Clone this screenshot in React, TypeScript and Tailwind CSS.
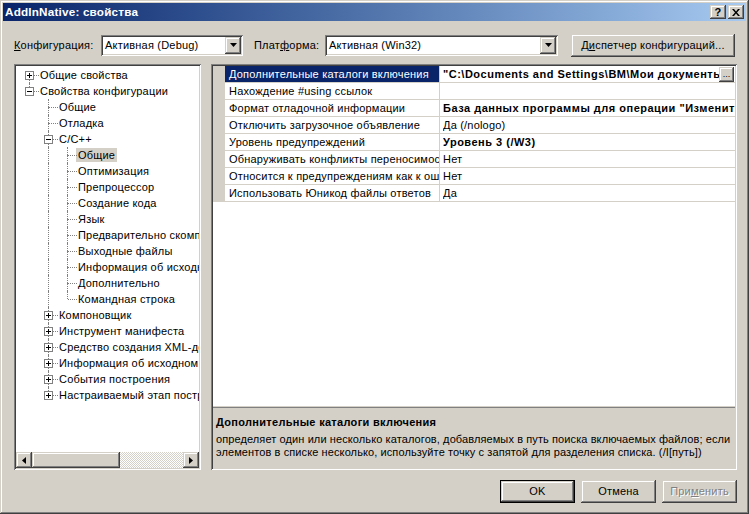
import React from "react";

const raised =
  "shadow-[inset_-1px_-1px_#404040,inset_1px_1px_#d4d0c8,inset_-2px_-2px_#808080,inset_2px_2px_#ffffff]";
const sunken =
  "shadow-[inset_1px_1px_#808080,inset_-1px_-1px_#ffffff,inset_2px_2px_#404040,inset_-2px_-2px_#d4d0c8]";

interface Node {
  t: string;
  d: number;
  box?: "+" | "-";
  up: boolean;
  down: boolean;
  anc: boolean[];
  sel?: boolean;
}

const lvl2 = [
  "Общие",
  "Оптимизация",
  "Препроцессор",
  "Создание кода",
  "Язык",
  "Предварительно скомпилированные заголовки",
  "Выходные файлы",
  "Информация об исходном коде",
  "Дополнительно",
  "Командная строка",
];

const lvl1After = [
  "Компоновщик",
  "Инструмент манифеста",
  "Средство создания XML-документов",
  "Информация об исходном коде",
  "События построения",
  "Настраиваемый этап построения",
];

const tree: Node[] = [
  { t: "Общие свойства", d: 0, box: "+", up: false, down: true, anc: [] },
  { t: "Свойства конфигурации", d: 0, box: "-", up: true, down: false, anc: [] },
  { t: "Общие", d: 1, up: true, down: true, anc: [false] },
  { t: "Отладка", d: 1, up: true, down: true, anc: [false] },
  { t: "C/C++", d: 1, box: "-", up: true, down: true, anc: [false] },
  ...lvl2.map((t, i) => ({
    t,
    d: 2,
    up: true,
    down: i < lvl2.length - 1,
    anc: [false, true],
    sel: i === 0,
  })),
  ...lvl1After.map((t, i) => ({
    t,
    d: 1,
    box: "+" as const,
    up: true,
    down: i < lvl1After.length - 1,
    anc: [false],
  })),
];

const props = [
  { n: "Дополнительные каталоги включения", v: "\"C:\\Documents and Settings\\BM\\Мои документы", b: true, sel: true },
  { n: "Нахождение #using ссылок", v: "" },
  { n: "Формат отладочной информации", v: "База данных программы для операции \"Изменить и продолжить\" (/ZI)", b: true },
  { n: "Отключить загрузочное объявление", v: "Да (/nologo)" },
  { n: "Уровень предупреждений", v: "Уровень 3 (/W3)", b: true },
  { n: "Обнаруживать конфликты переносимости на 64-разрядную платформу", v: "Нет" },
  { n: "Относится к предупреждениям как к ошибкам", v: "Нет" },
  { n: "Использовать Юникод файлы ответов", v: "Да" },
];

function ExpandBox({ sign }: { sign: "+" | "-" }) {
  return (
    <div className="absolute left-[5px] top-[4px] w-[9px] h-[9px] bg-white border border-[#808080] flex items-center justify-center">
      <div className="relative w-[5px] h-[5px]">
        <div className="absolute left-0 top-[2px] w-[5px] h-[1px] bg-black" />
        {sign === "+" && <div className="absolute left-[2px] top-0 w-[1px] h-[5px] bg-black" />}
      </div>
    </div>
  );
}

function TreeRow({ node }: { node: Node }) {
  return (
    <div className="flex h-[16px] items-center whitespace-nowrap">
      {node.anc.map((on, i) => (
        <div key={i} className="relative w-[19px] h-[16px] shrink-0">
          {on && <div className="absolute left-[9px] top-0 h-[16px] border-l border-dotted border-[#808080]" />}
        </div>
      ))}
      <div className="relative w-[19px] h-[16px] shrink-0">
        {node.up && <div className="absolute left-[9px] top-0 h-[8px] border-l border-dotted border-[#808080]" />}
        {node.down && <div className="absolute left-[9px] top-[8px] h-[8px] border-l border-dotted border-[#808080]" />}
        <div className="absolute left-[10px] top-[8px] w-[9px] border-t border-dotted border-[#808080]" />
        {node.box && <ExpandBox sign={node.box} />}
      </div>
      <span className={`px-[2px] -ml-[1px] leading-[14px] ${node.sel ? "bg-[#d4d0c8]" : ""}`}>{node.t}</span>
    </div>
  );
}

function Arrow({ dir }: { dir: "down" | "left" | "right" }) {
  const pts = dir === "down" ? "0,0 7,0 3.5,4" : dir === "left" ? "4,0 4,7 0,3.5" : "0,0 0,7 4,3.5";
  const w = dir === "down" ? 7 : 4;
  const h = dir === "down" ? 4 : 7;
  return (
    <svg width={w} height={h} viewBox={`0 0 ${w} ${h}`}>
      <polygon points={pts} fill="#000" />
    </svg>
  );
}

function Combo({ width, text }: { width: string; text: string }) {
  return (
    <div className={`${width} h-[21px] bg-white ${sunken} flex items-center p-[2px]`}>
      <span className="flex-1 pl-[2px] whitespace-nowrap overflow-hidden">{text}</span>
      <div className={`w-[16px] h-[17px] bg-[#d4d0c8] ${raised} flex items-center justify-center`}>
        <Arrow dir="down" />
      </div>
    </div>
  );
}

function Btn({ children, def, w = "w-[75px]" }: { children: React.ReactNode; def?: boolean; w?: string }) {
  return (
    <div className={`${w} h-[23px] ${def ? "border border-black" : ""} bg-[#d4d0c8]`}>
      <div className={`w-full h-full ${raised} flex items-center justify-center`}>{children}</div>
    </div>
  );
}

export default function App() {
  return (
    <div
      className={`w-[749px] h-[514px] bg-[#d4d0c8] ${raised} p-[3px] flex flex-col font-['Liberation_Sans',Arial,sans-serif] text-[11px] tracking-[0.2px] text-black overflow-hidden`}
    >
      {/* title bar */}
      <div className="h-[18px] bg-linear-to-r from-[#0a246a] to-[#a6caf0] flex items-center pl-[2px] pr-[2px]">
        <span className="flex-1 text-white font-bold text-[11.7px]">AddInNative: свойства</span>
        <div className={`w-[16px] h-[14px] bg-[#d4d0c8] ${raised} flex items-center justify-center font-bold text-[11px] leading-none`}>
          ?
        </div>
        <div className={`ml-[2px] w-[16px] h-[14px] bg-[#d4d0c8] ${raised} flex items-center justify-center`}>
          <svg width="8" height="7" viewBox="0 0 8 7">
            <path d="M0 0h2l2 2.5L6 0h2L5 3.5 8 7H6L4 4.5 2 7H0l3-3.5z" fill="#000" />
          </svg>
        </div>
      </div>

      {/* config row */}
      <div className="mt-[12px] flex items-center pl-[11px] h-[24px]">
        <span className="w-[87px]">
          <span className="underline">К</span>онфигурация:
        </span>
        <Combo width="w-[142px]" text="Активная (Debug)" />
        <span className="ml-[11px] w-[71px]">
          Плат<span className="underline">ф</span>орма:
        </span>
        <Combo width="w-[233px]" text="Активная (Win32)" />
        <div className="ml-[13px]">
          <Btn w="w-[164px]">
            <span>
              Д<span className="underline">и</span>спетчер конфигураций...
            </span>
          </Btn>
        </div>
      </div>

      {/* main panels */}
      <div className="mt-[7px] flex pl-[11px] h-[406px]">
        {/* tree */}
        <div className={`w-[187px] h-full bg-white ${sunken} p-[2px] flex flex-col`}>
          <div className="flex-1 overflow-hidden pl-[4px] pt-[1px]">
            {tree.map((n, i) => (
              <TreeRow key={i} node={n} />
            ))}
          </div>
          <div className="h-[16px] flex">
            <div className={`w-[16px] h-[16px] bg-[#d4d0c8] ${raised} flex items-center justify-center`}>
              <Arrow dir="left" />
            </div>
            <div className={`w-[88px] h-[16px] bg-[#d4d0c8] ${raised}`} />
            <div className="flex-1 bg-[repeating-conic-gradient(#ffffff_0%_25%,#d4d0c8_0%_50%)] bg-size-[2px_2px]" />
            <div className={`w-[16px] h-[16px] bg-[#d4d0c8] ${raised} flex items-center justify-center`}>
              <Arrow dir="right" />
            </div>
          </div>
        </div>

        {/* property grid */}
        <div className={`ml-[10px] w-[526px] h-full ${sunken} p-[2px] flex flex-col bg-[#d4d0c8]`}>
          <div className="h-[340px] bg-white overflow-hidden">
            {props.map((p, i) => (
              <div key={i} className="flex h-[17px]">
                <div className="w-[12px] bg-[#d4d0c8] shrink-0" />
                <div className="flex-1 min-w-0 flex border-b border-[#d4d0c8]">
                  <div
                    className={`w-[215px] shrink-0 border-r border-[#d4d0c8] pl-[4px] whitespace-nowrap overflow-hidden flex items-center ${
                      p.sel ? "bg-[#0a246a] text-white" : ""
                    }`}
                  >
                    {p.n}
                  </div>
                  <div
                    className={`flex-1 min-w-0 flex items-center pl-[3px] whitespace-nowrap overflow-hidden ${
                      p.b ? "font-bold tracking-[0.5px]" : ""
                    }`}
                  >
                    <span className="flex-1 min-w-0 overflow-hidden">{p.v}</span>
                    {p.sel && (
                      <div
                        className={`w-[15px] h-[15px] mr-[1px] shrink-0 bg-[#d4d0c8] ${raised} flex items-end justify-center pb-[3px] font-normal text-[9px] tracking-normal leading-none`}
                      >
                        ...
                      </div>
                    )}
                  </div>
                </div>
              </div>
            ))}
          </div>
          <div className="h-[2px] border-b border-[#808080]" />
          <div className="flex-1 px-[3px] pt-[8px] leading-[13px] tracking-[0.1px]">
            <div className="font-bold tracking-[0.3px]">Дополнительные каталоги включения</div>
            <div className="mt-[4px] whitespace-nowrap">
              определяет один или несколько каталогов, добавляемых в путь поиска включаемых файлов; если
            </div>
            <div className="whitespace-nowrap">
              элементов в списке несколько, используйте точку с запятой для разделения списка. (/I[путь])
            </div>
          </div>
        </div>
      </div>

      {/* bottom buttons */}
      <div className="mt-[10px] flex justify-end pr-[9px] gap-[6px]">
        <Btn def>OK</Btn>
        <Btn>Отмена</Btn>
        <Btn>
          <span className="text-[#808080] [text-shadow:1px_1px_0_#ffffff]">
            При<span className="underline">м</span>енить
          </span>
        </Btn>
      </div>
    </div>
  );
}
